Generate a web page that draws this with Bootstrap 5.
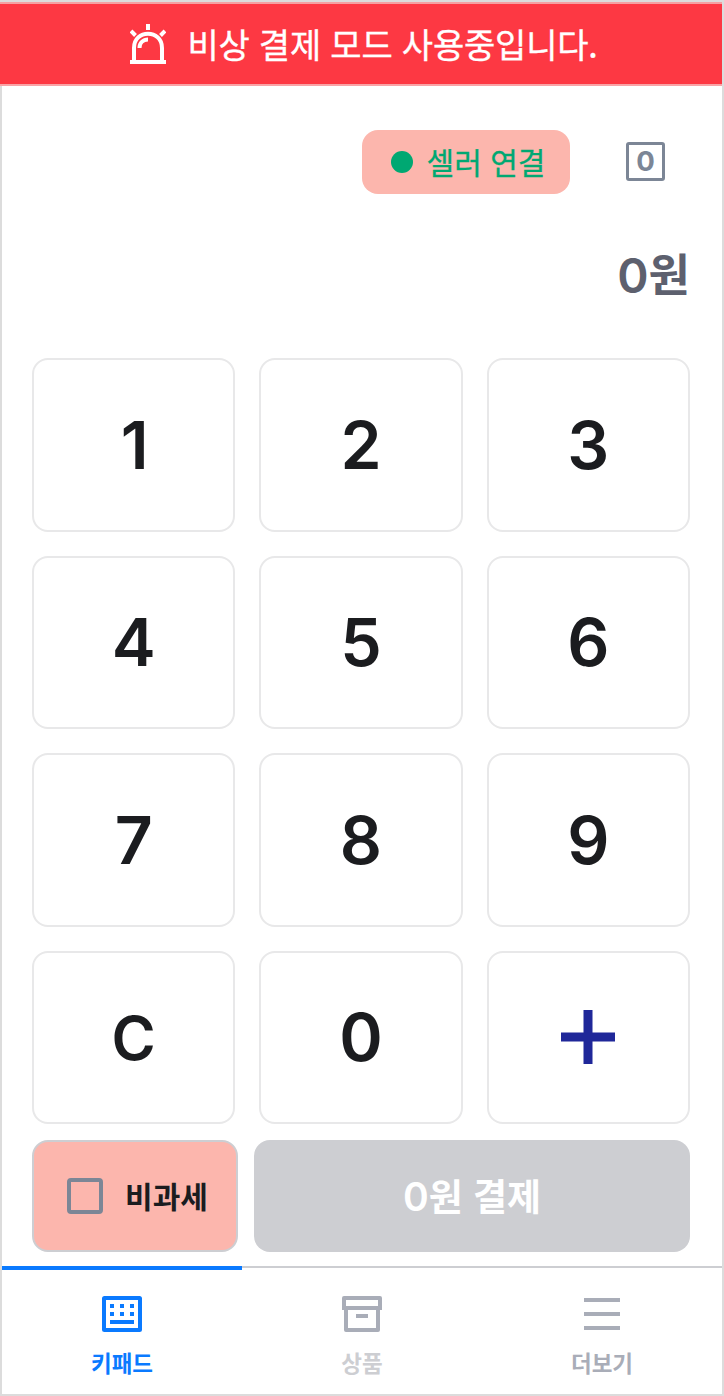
<!DOCTYPE html>
<html lang="ko">
<head>
<meta charset="utf-8">
<meta name="viewport" content="width=device-width, initial-scale=1">
<title>키패드 결제</title>
<link href="https://cdn.jsdelivr.net/npm/bootstrap@5.3.0/dist/css/bootstrap.min.css" rel="stylesheet">
<style>
  body { font-family: Inter, "Noto Sans CJK KR", sans-serif; color: #1b1c1f; line-height: 1; }
  .ko { font-family: "Noto Sans CJK KR", sans-serif; }
  svg { display: block; flex: none; }
  .pos-frame { width: 724px; height: 1396px; border: 2px solid #dcdcdc; background: #fff; }
  .alert-bar { height: 84px; margin-left: -2px; padding-left: 6px; background: #fd3843; border-top: 2px solid #f4a0a2; border-bottom: 2px solid #f9a3a6; color: #fff; }
  .alert-bar span { font-size: 34px; letter-spacing: -.2px; margin-left: 21px; padding-bottom: 1px; -webkit-text-stroke: .35px #fff; }
  .top-row { height: 64px; margin-top: 44px; padding-right: 57px; }
  .seller-pill { width: 208px; height: 64px; padding-left: 4px; border-radius: 16px; background: #fcb6ad; color: #00a872; font-size: 30px; margin-right: 56px; }
  .seller-pill span { padding-bottom: 2px; -webkit-text-stroke: .3px #00a872; }
  .seller-dot { width: 22px; height: 22px; border-radius: 50%; background: #00a872; margin-right: 14px; }
  .count-box { width: 39px; height: 39px; margin-bottom: 1px; border: 3px solid #7c8696; border-radius: 3px; color: #7c8696; font-size: 27.5px; font-weight: 700; padding-top: 1px; }
  .amount { height: 60px; margin-top: 50px; padding-right: 32px; color: #5d606e; font-size: 47.500px; font-weight: 600; }
  .amount > span { padding-top: 3px; }
  .amount .ko { font-size: 45px; padding-top: 0; padding-bottom: 3px; }
  .keypad { display: grid; grid-template-columns: repeat(3, 1fr); grid-template-rows: repeat(4, 1fr); gap: 24px; height: 766px; margin: 54px 32px 0 30px; }
  .key { border: 2px solid #e8e8e9; border-radius: 16px; background: #fff; color: #1b1c1f; font-size: 66px; font-weight: 600; padding: 0; }
  .key-one { padding-left: 2px; }
  .key-c { font-size: 60px; padding-top: 1px; }
  .pay-row { height: 112px; gap: 16px; margin: 16px 32px 0 30px; }
  .tax-free { width: 206px; padding-left: 5px; border: 2px solid #cdced2; border-radius: 16px; background: #fcb6ad; font-size: 30px; font-weight: 700; }
  .tax-free span { padding-bottom: 3px; }
  .tick { width: 36px; height: 36px; border: 4px solid #7c8696; border-radius: 4px; margin-right: 22px; }
  .pay { border-radius: 16px; background: #cdced2; color: #fff; font-size: 39px; font-weight: 600; }
  .pay .ko { font-size: 37px; font-weight: 700; padding-bottom: 2px; }
  .tabs { height: 128px; margin-top: 14px; border-top: 2px solid #cdced2; }
  .tab-item { margin-top: -2px; padding-top: 26px; border-top: 4px solid transparent; color: #a9adb8; font-size: 22.500px; font-weight: 700; }
  .tab-item.active { border-color: #0a7aff; color: #0a7aff; }
  .tab-item span { margin-top: 19px; }
  .tab-off { color: #cdced2; }
</style>
</head>
<body>
<div class="pos-frame d-flex flex-column">
  <div class="alert-bar ko d-flex align-items-center justify-content-center">
    <svg width="36" height="40" viewBox="0 0 36 40" fill="none" stroke="#fff" stroke-width="4">
      <path d="M0 38h36M4 38V24C4 5 32 5 32 24v14M18 0v6M1 7l4.500 4.500M35 7l-4.500 4.500"/>
      <path d="M9.500 24c0-5 3.500-8.500 8.500-8.500"/>
    </svg>
    <span>비상 결제 모드 사용중입니다.</span>
  </div>

  <div class="top-row d-flex align-items-center justify-content-end">
    <div class="seller-pill ko d-flex align-items-center justify-content-center">
      <i class="seller-dot"></i><span>셀러 연결</span>
    </div>
    <div class="count-box d-flex align-items-center justify-content-center">0</div>
  </div>

  <div class="amount d-flex align-items-center justify-content-end"><span>0</span><span class="ko">원</span></div>

  <div class="keypad">
    <button class="key key-one">1</button><button class="key">2</button><button class="key">3</button>
    <button class="key">4</button><button class="key">5</button><button class="key">6</button>
    <button class="key">7</button><button class="key">8</button><button class="key">9</button>
    <button class="key key-c">C</button><button class="key">0</button>
    <button class="key d-flex align-items-center justify-content-center" aria-label="더하기">
      <svg width="54" height="54" viewBox="0 0 54 54" stroke="#1f2799" stroke-width="9"><path d="M0 27h54M27 0v54"/></svg>
    </button>
  </div>

  <div class="pay-row d-flex">
    <div class="tax-free ko d-flex align-items-center justify-content-center">
      <i class="tick"></i><span>비과세</span>
    </div>
    <div class="pay flex-grow-1 d-flex align-items-center justify-content-center"><span>0</span><span class="ko">원 결제</span></div>
  </div>

  <nav class="tabs ko d-flex">
    <div class="tab-item active flex-fill w-100 d-flex flex-column align-items-center">
      <svg width="40" height="36" viewBox="0 0 40 36" fill="currentColor">
        <rect x="2" y="2" width="36" height="32" rx=".5" fill="none" stroke="currentColor" stroke-width="4"/>
        <path d="M8 8h4v4H8zM18 8h4v4h-4zM28 8h4v4h-4zM8 16h4v4H8zM18 16h4v4h-4zM28 16h4v4h-4zM8 24h24v4H8z"/>
      </svg>
      <span>키패드</span>
    </div>
    <div class="tab-item flex-fill w-100 d-flex flex-column align-items-center">
      <svg width="40" height="36" viewBox="0 0 40 36" fill="none" stroke="currentColor" stroke-width="4" stroke-linejoin="round">
        <path d="M2 14V2h36v12M2 12h36M4 12v22h32V12M14 20h12"/>
      </svg>
      <span class="tab-off">상품</span>
    </div>
    <div class="tab-item flex-fill w-100 d-flex flex-column align-items-center">
      <svg width="36" height="36" viewBox="0 0 36 36" stroke="currentColor" stroke-width="4"><path d="M0 4h36M0 18h36M0 32h36"/></svg>
      <span>더보기</span>
    </div>
  </nav>
</div>
<script src="https://cdn.jsdelivr.net/npm/bootstrap@5.3.0/dist/js/bootstrap.bundle.min.js"></script>
</body>
</html>
